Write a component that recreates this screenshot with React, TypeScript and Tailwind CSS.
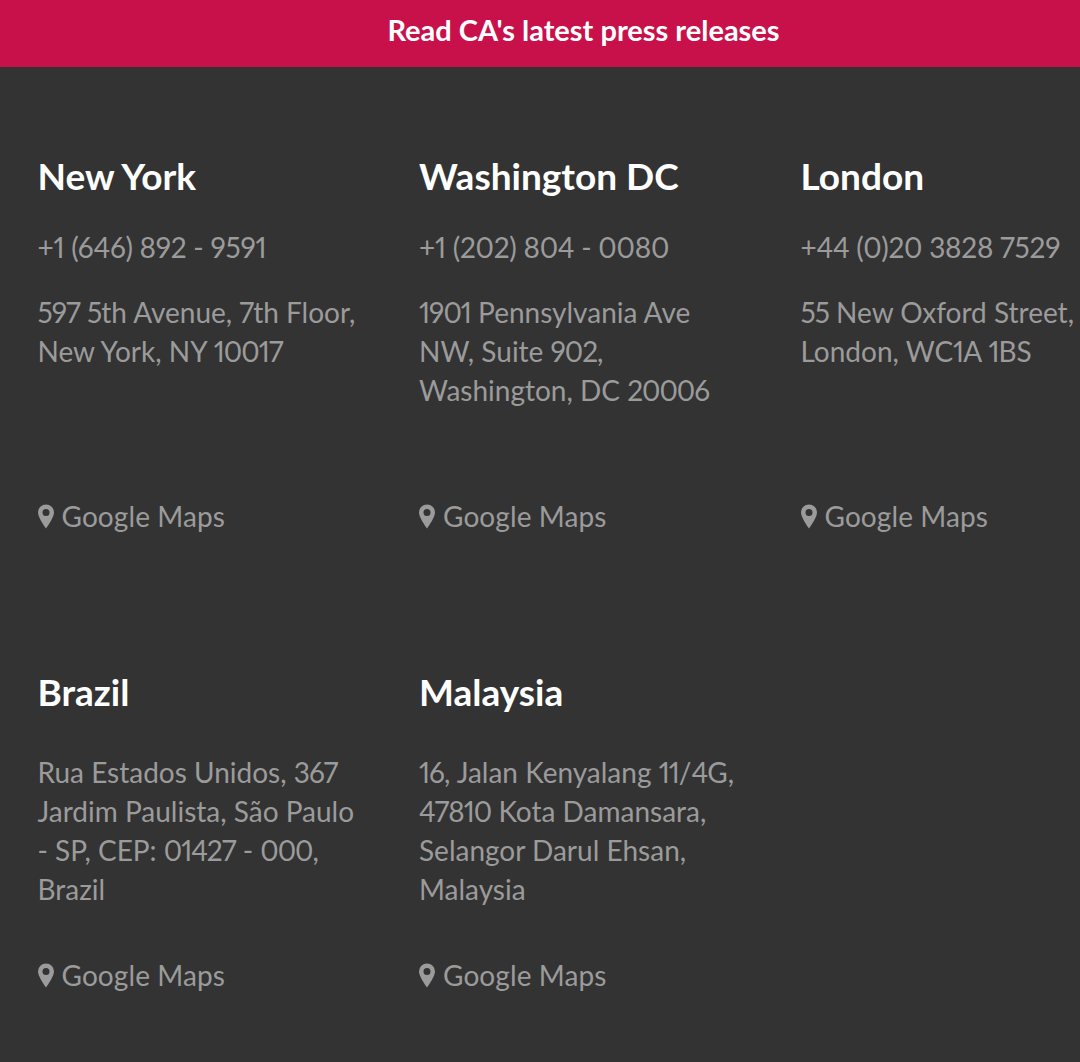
const offices = [
  { name: 'New York', phone: '+1 (646) 892 - 9591', address: ['597 5th Avenue, 7th Floor,', 'New York, NY 10017'] },
  { name: 'Washington DC', phone: '+1 (202) 804 - 0080', address: ['1901 Pennsylvania Ave', 'NW, Suite 902,', 'Washington, DC 20006'] },
  { name: 'London', phone: '+44 (0)20 3828 7529', address: ['55 New Oxford Street,', 'London, WC1A 1BS'] },
]

const offices2 = [
  { name: 'Brazil', address: ['Rua Estados Unidos, 367', 'Jardim Paulista, São Paulo', '- SP, CEP: 01427 - 000,', 'Brazil'] },
  { name: 'Malaysia', address: ['16, Jalan Kenyalang 11/4G,', '47810 Kota Damansara,', 'Selangor Darul Ehsan,', 'Malaysia'] },
]

// Lato's digits run wider than the original font, so pull them in a bit
function AddressLine({ text }: { text: string }) {
  return (
    <span className="block whitespace-nowrap">
      {text.split(/(\d+)/).map((part, i) =>
        /\d/.test(part) ? <span key={i} className="tracking-[-1px]">{part}</span> : part
      )}
    </span>
  )
}

function Maps() {
  return (
    <div className="flex items-center gap-[8px] text-[28px] leading-[39px] text-[#9b9b9b]">
      <svg width="16" height="25" viewBox="0 0 16 24" className="shrink-0 fill-[#9b9b9b]">
        <path fillRule="evenodd" d="M8 0a8 8 0 0 0-8 8c0 4.5 5.5 12.5 8 16 2.500-3.500 8-11.500 8-16a8 8 0 0 0-8-8zm0 4.500a3.500 3.500 0 1 1 0 7 3.500 3.500 0 0 1 0-7z" />
      </svg>
      <span className="tracking-[0.1px]">Google Maps</span>
    </div>
  )
}

export default function App() {
  return (
    <div className="h-[1062px] overflow-hidden bg-[#333333] font-['Lato',sans-serif] proportional-nums">
      <div className="flex h-[67px] items-center justify-center bg-[#c8114b] pb-[7px] pl-[87px] text-[29px] font-bold text-white">
        Read CA's latest press releases
      </div>
      <div className="grid w-[1200px] grid-cols-[381.5px_381.5px_381.5px] pl-[37.5px] pt-[86px]">
        {offices.map((o) => (
          <div key={o.name} className="h-[516px]">
            <h2 className="text-[37px] font-bold leading-[46px] text-white">{o.name}</h2>
            <p className="mt-[29px] text-[28px] leading-[39px] tracking-[-0.25px] text-[#9b9b9b]">{o.phone}</p>
            <p className="mt-[26px] h-[204px] text-[28px] leading-[39px] text-[#9b9b9b]">
              {o.address.map((l) => <AddressLine key={l} text={l} />)}
            </p>
            <Maps />
          </div>
        ))}
        {offices2.map((o) => (
          <div key={o.name}>
            <h2 className="text-[37px] font-bold leading-[46px] text-white">{o.name}</h2>
            <p className="mt-[38px] h-[203px] text-[28px] leading-[39px] text-[#9b9b9b]">
              {o.address.map((l) => <AddressLine key={l} text={l} />)}
            </p>
            <Maps />
          </div>
        ))}
      </div>
    </div>
  )
}
